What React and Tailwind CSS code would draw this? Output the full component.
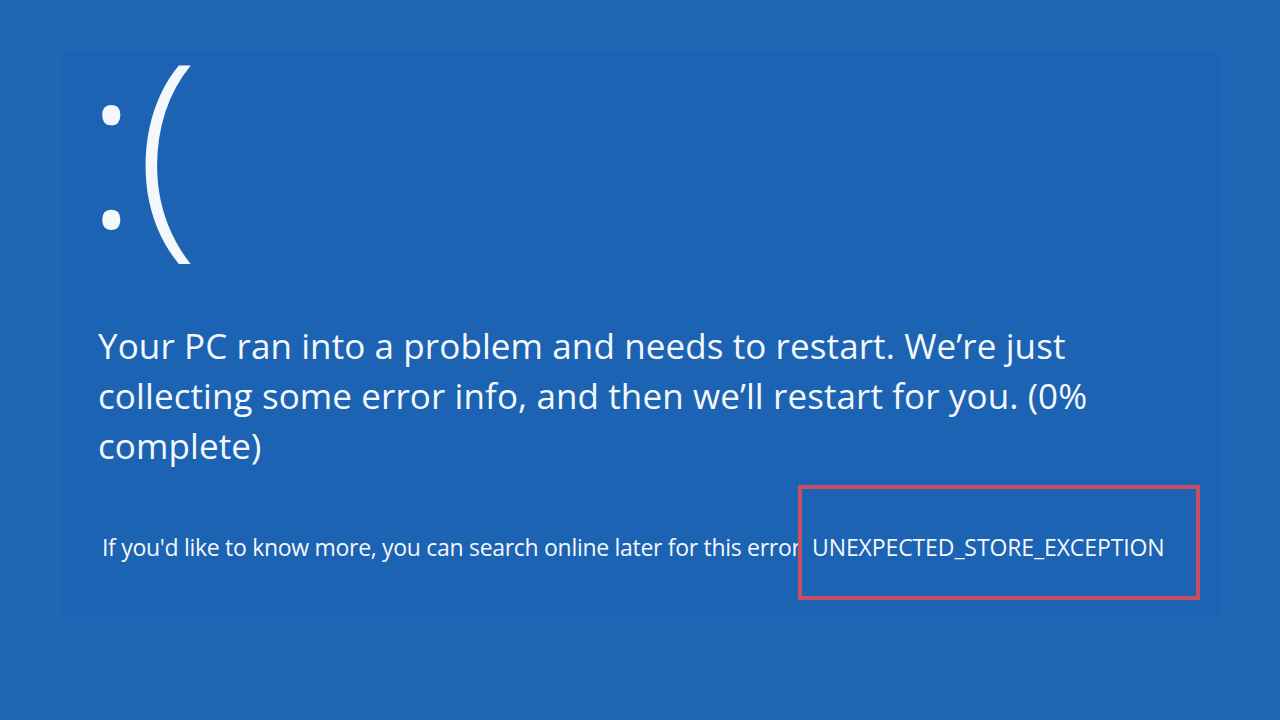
import React from 'react';

const App = () => {
    return (
        <div className="w-[1280px] h-[720px] bg-[#2166b4] pt-[52px] pl-[62px]" style={{ fontFamily: '"Open Sans", "Noto Sans", sans-serif' }}>
            <div className="w-[1158px] h-[563px] bg-[#1c63b3] text-[#f4f8fc] flex flex-col">
                <div className="ml-[22px] mt-[-67px] text-[228px] leading-[310px] font-light tracking-[-2px] select-none">
                    :(
                </div>
                <p className="ml-[36px] mt-[26px] w-[1010px] text-[35px] leading-[50px] tracking-[0.1px]">
                    Your PC ran into a problem and needs to restart. We’re just collecting some error info, and then we’ll restart for you. (0% complete)
                </p>
                <div className="mt-[14px] flex items-center">
                    <span className="ml-[40px] w-[696px] pt-[9px] text-[23px] tracking-[-0.3px] whitespace-nowrap">
                        If you'd like to know more, you can search online later for this error
                    </span>
                    <div className="w-[402px] h-[115px] border-[4px] border-[#c64f64] flex items-center pt-[9px]">
                        <span className="ml-[10px] text-[23px] tracking-[-0.1px]">UNEXPECTED_STORE_EXCEPTION</span>
                    </div>
                </div>
            </div>
        </div>
    );
};

export default App;
